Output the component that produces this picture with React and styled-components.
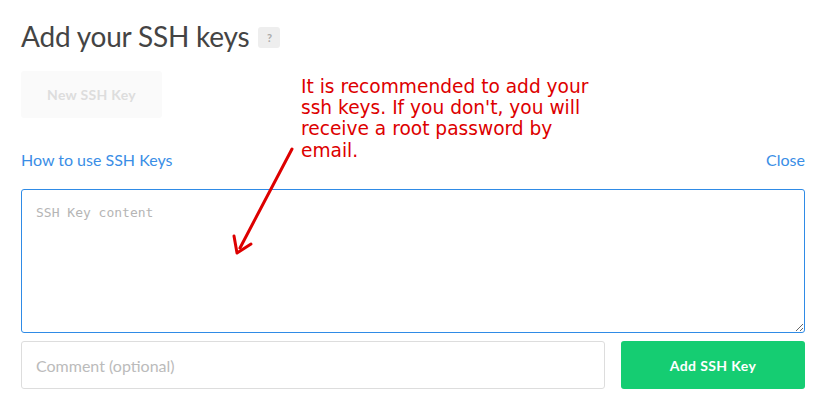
import React from 'react'
import styled, { createGlobalStyle } from 'styled-components'

const GlobalStyle = createGlobalStyle`
  body {
    margin: 0;
    background: #fff;
    font-family: Lato, "Open Sans", sans-serif;
  }
`

const Page = styled.section`
  position: relative;
  width: 784px;
  padding: 17px 0 0 21px;
`

const TitleRow = styled.div`
  display: flex;
  align-items: center;
  gap: 9px;
  height: 38px;
`

const Title = styled.h1`
  margin: 0;
  font-size: 28px;
  font-weight: 400;
  color: #444;
  letter-spacing: -0.2px;
`

const HelpBadge = styled.span`
  display: inline-flex;
  align-items: center;
  justify-content: center;
  width: 22px;
  height: 21px;
  border-radius: 3px;
  background: #eee;
  color: #aaa;
  font-size: 11px;
  font-weight: 700;
  margin-top: 2px;
`

const GhostButton = styled.button`
  margin-top: 16px;
  width: 141px;
  height: 47px;
  border: none;
  border-radius: 3px;
  background: #fafafa;
  color: #ddd;
  font-family: Lato, sans-serif;
  font-size: 14px;
  font-weight: 700;
  letter-spacing: 0.3px;
`

const LinkRow = styled.div`
  display: flex;
  justify-content: space-between;
  margin-top: 32px;
  height: 20px;
`

const Link = styled.a`
  color: #3a8ee6;
  font-size: 16px;
  cursor: pointer;
`

const KeyArea = styled.textarea`
  display: block;
  box-sizing: border-box;
  margin-top: 19px;
  width: 784px;
  height: 144px;
  padding: 15px 14px;
  border: 1px solid #2f8be6;
  border-radius: 3px;
  outline: none;
  font-family: "DejaVu Sans Mono", monospace;
  font-size: 13px;
  resize: both;
  &::placeholder {
    color: #b5b5b5;
  }
`

const BottomRow = styled.div`
  display: flex;
  gap: 16px;
  margin-top: 8px;
  width: 784px;
`

const CommentInput = styled.input`
  box-sizing: border-box;
  width: 584px;
  height: 48px;
  padding: 0 14px;
  border: 1px solid #ddd;
  border-radius: 3px;
  font-family: Lato, sans-serif;
  font-size: 16px;
  outline: none;
  &::placeholder {
    color: #bbb;
  }
`

const AddButton = styled.button`
  flex: 1;
  height: 48px;
  border: none;
  border-radius: 3px;
  background: #15cd72;
  color: #fff;
  font-family: Lato, sans-serif;
  font-size: 14px;
  font-weight: 700;
  letter-spacing: 0.4px;
`

const Note = styled.p`
  position: absolute;
  left: 301px;
  top: 76px;
  width: 310px;
  margin: 0;
  font-family: "DejaVu Sans", sans-serif;
  font-size: 18.6px;
  line-height: 21.2px;
  color: #dd0000;
`

const Arrow = styled.svg`
  position: absolute;
  left: 230px;
  top: 144px;
`

const App = () => (
  <>
    <GlobalStyle />
    <Page>
      <TitleRow>
        <Title>Add your SSH keys</Title>
        <HelpBadge>?</HelpBadge>
      </TitleRow>
      <GhostButton>New SSH Key</GhostButton>
      <LinkRow>
        <Link>How to use SSH Keys</Link>
        <Link>Close</Link>
      </LinkRow>
      <KeyArea placeholder="SSH Key content" />
      <BottomRow>
        <CommentInput placeholder="Comment (optional)" />
        <AddButton>Add SSH Key</AddButton>
      </BottomRow>
      <Note>
        It is recommended to add your ssh keys. If you don't, you will receive a root password by email.
      </Note>
      <Arrow width="80" height="120" viewBox="0 0 80 120">
        <line x1="62" y1="5" x2="10" y2="104" stroke="#dd0000" strokeWidth="3" strokeLinecap="round" />
        <polyline points="4,92 7,109 21,100" fill="none" stroke="#dd0000" strokeWidth="3" strokeLinecap="round" strokeLinejoin="round" />
      </Arrow>
    </Page>
  </>
)

export default App
